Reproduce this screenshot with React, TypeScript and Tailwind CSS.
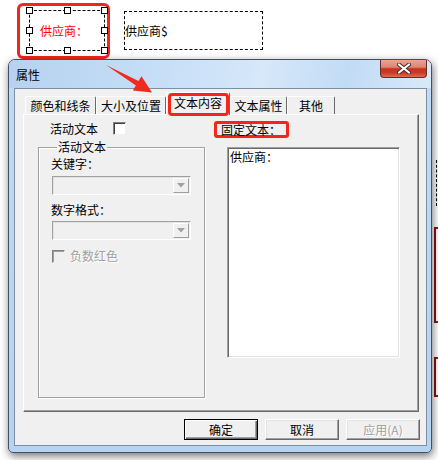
import React from "react";

const tabs = [
  { label: "颜色和线条", w: "w-[71px]" },
  { label: "大小及位置", w: "w-[70px]" },
  { label: "文本内容", w: "w-[64px]", active: true },
  { label: "文本属性", w: "w-[57px]" },
  { label: "其他", w: "w-[48px]" },
];

function Handle({ pos }: { pos: string }) {
  return <span className={`absolute h-[7px] w-[7px] border border-black bg-white ${pos}`} />;
}

function Checkbox({ disabled }: { disabled?: boolean }) {
  return (
    <span
      className={`block h-[13px] w-[13px] border border-t-[#808080] border-l-[#808080] border-r-[#f0f0f0] border-b-[#f0f0f0] shadow-[inset_1px_1px_0_#404040] ${
        disabled ? "bg-[#f0f0f0] shadow-[inset_1px_1px_0_#a0a0a0]" : "bg-white"
      }`}
    />
  );
}

function Combo() {
  return (
    <div className="ml-[1px] flex h-[19px] w-[139px] justify-end border border-t-[#a0a0a0] border-l-[#a0a0a0] border-r-white border-b-white bg-[#f0f0f0] p-[1px] shadow-[inset_1px_1px_0_#e3e3e3]">
      <div className="flex h-full w-[16px] items-center justify-center border border-t-white border-l-white border-r-[#a0a0a0] border-b-[#a0a0a0] bg-[#f0f0f0]">
        <svg width="8" height="5" viewBox="0 0 8 5">
          <path d="M0 0h8L4 4.5z" fill="#a0a0a0" />
        </svg>
      </div>
    </div>
  );
}

export default function App() {
  return (
    <div className="relative h-[460px] w-[438px] overflow-hidden bg-white font-['Noto_Sans_CJK_SC','Liberation_Sans',sans-serif] text-[12px] leading-[14px] text-black">
      {/* canvas objects behind the dialog */}
      <span className="absolute left-[436px] top-[160px] h-[46px] border-l border-dashed border-black" />
      <span className="absolute left-[434px] top-[227px] h-[96px] w-[10px] border-2 border-[#8b1111] shadow-[inset_2px_0_0_#fff]" />
      <span className="absolute left-[434px] top-[357px] h-[40px] w-[10px] border-2 border-[#8b1111]" />

      <div className="flex h-[59px] items-start pl-[17px] pt-[3px]">
        <div className="h-[56px] w-[93px] rounded-[6px] border-[3px] border-[#f5251b] pl-[9px] pt-[4px]">
          <div className="relative flex h-[41px] w-[76px] items-center justify-center border border-dashed border-black pr-[6px] text-[#f00]">
            供应商：
            <Handle pos="-left-[4px] -top-[4px]" />
            <Handle pos="left-[34px] -top-[4px]" />
            <Handle pos="-right-[4px] -top-[4px]" />
            <Handle pos="-left-[4px] top-[16px]" />
            <Handle pos="-right-[4px] top-[16px]" />
            <Handle pos="-left-[4px] -bottom-[4px]" />
            <Handle pos="left-[34px] -bottom-[4px]" />
            <Handle pos="-right-[4px] -bottom-[4px]" />
          </div>
        </div>
        <div className="ml-[14px] mt-[8px] flex h-[39px] w-[139px] items-center border border-dashed border-black">供应商$</div>
      </div>

      {/* dialog */}
      <div className="relative ml-[8px] h-[394px] w-[424px] rounded-t-[7px] rounded-b-[5px] border border-[#44505e] bg-[linear-gradient(180deg,#c3dbf4_0%,#bcd7f3_40%,#b5d3f2_100%)] shadow-[1px_3px_8px_rgba(0,0,0,0.55)]">
        <div className="flex h-[28px] items-start justify-between rounded-t-[6px] bg-[linear-gradient(100deg,#b6d2f0_0%,#c6def6_35%,#d6e8fa_60%,#c2dbf5_80%,#d9e9fa_100%)]">
          <span className="ml-[7px] mt-[8px]">属性</span>
          <div className="mr-[4px] flex h-[18px] w-[47px] items-center justify-center rounded-b-[4px] border border-t-0 border-[#6b2a22] bg-[linear-gradient(180deg,#e9a595_0%,#de8571_42%,#c4331f_52%,#c63c26_75%,#dc6d52_100%)]">
            <svg width="14" height="11" viewBox="0 0 14 11">
              <path d="M2 1.5l10 8M12 1.5l-10 8" stroke="#4a2a26" strokeWidth="4" strokeLinecap="round" />
              <path d="M2 1.5l10 8M12 1.5l-10 8" stroke="#fff" strokeWidth="2.2" strokeLinecap="round" />
            </svg>
          </div>
        </div>

        <div className="ml-[5px] h-[358px] w-[413px] border border-[#7e8fa2] bg-[#f0f0f0]">
          {/* tabs */}
          <div className="flex h-[25px] items-end pl-[10px] pt-[3px]">
            {tabs.map((t) =>
              t.active ? (
                <div key={t.label} className={`relative z-10 -mb-[1px] flex h-[23px] items-center justify-center rounded-t-[2px] border-l border-t border-r border-l-white border-t-white border-r-[#696969] bg-[#f0f0f0] pb-[2px] ${t.w}`}>
                  {t.label}
                  <span className="absolute -bottom-[1px] left-[1px] right-[0px] top-0 rounded-[4px] border-[3px] border-[#f5251b]" />
                </div>
              ) : (
                <div key={t.label} className={`flex h-[18px] items-center justify-center rounded-t-[2px] border-l border-t border-r border-l-white border-t-white border-r-[#696969] bg-[#f0f0f0] ${t.w}`}>
                  {t.label}
                </div>
              ),
            )}
          </div>

          {/* panel */}
          <div className="ml-[8px] flex h-[298px] w-[396px] border border-t-white border-l-white border-r-[#696969] border-b-[#696969] pl-[14px] pt-[7px] shadow-[inset_-1px_-1px_0_#a0a0a0]">
            <div className="flex w-[167px] flex-col">
              <div className="flex h-[13px] items-center gap-[15px] pl-[12px]">
                <span>活动文本</span>
                <Checkbox />
              </div>
              <fieldset className="mt-[5px] h-[258px] w-[167px] border border-[#a0a0a0] pl-[12px] pt-[3px] shadow-[inset_1px_1px_0_#fff,1px_1px_0_#fff]">
                <legend className="ml-[6px] px-[1px] leading-[14px]">活动文本</legend>
                <p>关键字：</p>
                <div className="mt-[5px]">
                  <Combo />
                </div>
                <p className="mt-[8px]">数字格式：</p>
                <div className="mt-[4px]">
                  <Combo />
                </div>
                <div className="ml-[1px] mt-[9px] flex items-center gap-[5px]">
                  <Checkbox disabled />
                  <span className="text-[#a0a0a0] [text-shadow:1px_1px_0_#fff]">负数红色</span>
                </div>
              </fieldset>
            </div>

            <div className="-mt-[1px] ml-[9px] flex flex-col">
              <div className="flex h-[17px] w-[75px] items-center rounded-[3px] border-[3px] border-[#f5251b] pl-[4px]">固定文本：</div>
              <div className="ml-[13px] mt-[9px] h-[211px] w-[173px] border border-t-[#a0a0a0] border-l-[#a0a0a0] border-r-white border-b-white bg-white pl-[2px] pt-[2px] shadow-[inset_1px_1px_0_#696969,inset_-1px_-1px_0_#e3e3e3]">
                供应商：
              </div>
            </div>
          </div>

          {/* buttons */}
          <div className="mt-[7px] flex justify-end gap-[7px] pr-[6px]">
            <button className="h-[21px] w-[74px] border border-black bg-[#f0f0f0] shadow-[inset_1px_1px_0_#fff,inset_-1px_-1px_0_#696969,inset_-2px_-2px_0_#a0a0a0]">确定</button>
            <button className="h-[21px] w-[74px] border border-t-white border-l-white border-r-[#696969] border-b-[#696969] bg-[#f0f0f0] shadow-[inset_-1px_-1px_0_#a0a0a0,inset_1px_1px_0_#e3e3e3]">取消</button>
            <button className="h-[21px] w-[74px] border border-t-white border-l-white border-r-[#696969] border-b-[#696969] bg-[#f0f0f0] text-[#a0a0a0] shadow-[inset_-1px_-1px_0_#a0a0a0,inset_1px_1px_0_#e3e3e3] [text-shadow:1px_1px_0_#fff]">应用(A)</button>
          </div>
        </div>
      </div>

      {/* red pointer arrow */}
      <svg className="pointer-events-none absolute left-0 top-0" width="438" height="460" viewBox="0 0 438 460">
        <polygon points="106,65 138.5,81.1 141.5,76.2 152,92.5 132.8,90.6 135.9,85.5" fill="#ef2b20" />
      </svg>
    </div>
  );
}
